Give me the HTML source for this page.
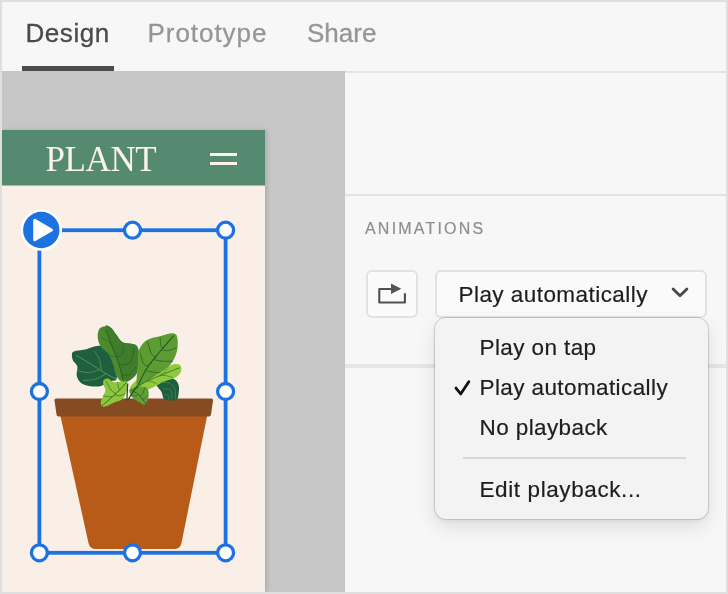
<!DOCTYPE html>
<html>
<head>
<meta charset="utf-8">
<style>
html,body{margin:0;padding:0;}
body{width:728px;height:594px;overflow:hidden;background:#dfdfdf;font-family:"Liberation Sans",sans-serif;position:relative;}
#app{position:absolute;left:2px;top:2px;width:724px;height:590px;background:#f7f7f7;overflow:hidden;will-change:transform;}
.abs{position:absolute;}
#topbar{left:0;top:0;width:724px;height:69px;background:#f7f7f7;}
.tab{position:absolute;top:15.5px;font-size:26px;line-height:30px;color:#969696;white-space:nowrap;-webkit-text-stroke:0.3px currentColor;}
#canvas{left:0;top:69px;width:343px;height:521px;background:#c6c6c6;}
#panel{left:343px;top:69px;width:381px;height:521px;background:#f7f7f7;}
.hr{position:absolute;background:#e3e3e3;height:2px;}
#art{left:0;top:128px;width:263px;height:462px;background:#f9efe7;box-shadow:2px 0 4px rgba(0,0,0,0.13);}
#arthead{left:0;top:0;width:263px;height:55px;background:#548a6f;border-bottom:1px solid #a6bcab;}
#plant{position:absolute;left:43.5px;top:9.5px;font-family:"Liberation Serif",serif;font-size:35px;line-height:40px;color:#fbf3ea;white-space:nowrap;letter-spacing:-0.4px;}
.btn{position:absolute;box-sizing:border-box;border:2px solid #e2e2e2;border-radius:6px;background:#fafafa;}
#menu{left:432.5px;top:315.5px;width:273.5px;height:201px;border-radius:11px;background:#f4f3f3;box-shadow:0 0 0 1px rgba(0,0,0,0.13),0 8px 20px rgba(0,0,0,0.1),0 2px 5px rgba(0,0,0,0.06);}
.mi{position:absolute;left:45px;font-size:22.5px;line-height:26px;letter-spacing:0.4px;color:#1e1e1e;white-space:nowrap;-webkit-text-stroke:0.2px #1e1e1e;}
</style>
</head>
<body>
<div id="app">
  <div id="topbar" class="abs">
    <div class="tab" style="left:23.5px;color:#4a4a4a;letter-spacing:0.55px;">Design</div>
    <div class="tab" style="left:145.5px;letter-spacing:0.95px;">Prototype</div>
    <div class="tab" style="left:305px;">Share</div>
    <div class="abs" style="left:20px;top:64px;width:92px;height:5px;background:#4b4b4b;"></div>
  </div>
  <div id="canvas" class="abs"></div>
  <div id="panel" class="abs">
    <div class="hr" style="left:0;top:0;width:381px;height:2px;"></div>
    <div class="hr" style="left:0;top:123px;width:381px;"></div>
    <div class="hr" style="left:0;top:293px;width:381px;height:3.5px;background:#e6e6e6;"></div>
    <div class="abs" style="left:20px;top:147.5px;font-size:16px;line-height:20px;letter-spacing:2.2px;color:#8e8e8e;-webkit-text-stroke:0.2px #8e8e8e;">ANIMATIONS</div>
  </div>
  <div id="art" class="abs">
    <div id="arthead" class="abs">
      <div id="plant">PLANT</div>
      <div class="abs" style="left:208px;top:23px;width:27px;height:3px;background:#fbf3ea;"></div>
      <div class="abs" style="left:208px;top:32px;width:27px;height:3px;background:#fbf3ea;"></div>
    </div>
    <svg class="abs" style="left:0;top:56px;" width="264" height="406" viewBox="2 186 264 406">
      <!-- pot -->
      <path d="M60 414 L207.5 414 L181.5 543 Q180.3 549 174 549 L96 549 Q89.7 549 88.5 543 Z" fill="#b85b18"/>
      <path d="M56 398.5 L211.5 398.5 Q213.2 398.5 213 400.5 L211 414.5 Q210.7 416.5 209 416.5 L58.5 416.5 Q56.8 416.5 56.5 414.5 L54.5 400.5 Q54.3 398.5 56 398.5 Z" fill="#854b21"/>
      <path d="M73.8 351.5C76 350.6 80.9 350.6 85 349.6C89.1 348.7 94.5 345.8 98.5 345.8C102.5 345.7 106.3 346.7 109 349.2C111.8 351.8 113.5 356.3 114.8 361.2C116.1 366 117.5 375.1 116.7 378.5C115.9 381.8 113 380 110 381.3C107 382.7 102.9 386.1 98.5 386.5C94 387 86.7 385.9 83.1 384.2C79.5 382.6 77.9 379.5 76.9 376.5C76 373.6 77.9 369.2 77.3 366.5C76.7 363.9 74 362.7 73.1 360.8C72.2 358.8 71.8 356.5 71.9 355C72.1 353.5 71.7 352.4 73.8 351.5Z" fill="#1f5f3f"/>
      <path d="M105.2 326.2C103.3 326.3 100.7 327 99.4 328.8C98.2 330.7 97.5 334.1 97.7 337.1C97.9 340.1 99 344 100.8 346.7C102.5 349.5 106.1 350.6 108.1 353.5C110.1 356.3 111.4 360.2 112.9 364C114.3 367.9 114.8 373.5 116.7 376.5C118.7 379.6 121.2 382.6 124.4 382.3C127.6 382 133.5 378.6 136 374.6C138.4 370.6 139 362.9 139.2 358.3C139.5 353.6 138.6 349.1 137.3 346.7C136 344.3 134 344.6 131.5 343.8C129.1 343.1 125.1 343.8 122.5 342.3C119.9 340.8 118.1 337.1 116.2 334.6C114.2 332.2 112.8 329.1 111 327.7C109.1 326.3 107.1 326 105.2 326.2Z" fill="#4b8b2e"/>
      <path d="M105.6 326.5C105.7 329.6 109.7 339.7 111.9 345.8C114.1 351.9 116.7 357.1 118.7 363.1C120.6 369.1 120.6 379.8 123.5 381.7C126.3 383.7 133.3 378.5 136 374.6C138.6 370.7 139 362.9 139.2 358.3C139.5 353.6 138.6 349.1 137.3 346.7C136 344.3 134 344.6 131.5 343.8C129.1 343.1 125.1 343.8 122.5 342.3C119.9 340.8 118.1 337.1 116.2 334.6C114.2 332.2 112.7 329 111 327.7C109.2 326.3 105.4 323.5 105.6 326.5Z" fill="#3f7c2b"/>
      <path d="M155.8 381.3C156.9 379.9 160.8 378.1 163.8 377.7C166.9 377.3 171.4 377.8 173.8 379C176.3 380.3 177.9 382.4 178.7 385.2C179.4 388 178.8 393.3 178.3 395.8C177.8 398.2 178 399.4 175.8 400C173.5 400.6 167.2 401 164.8 399.6C162.4 398.3 162.8 394.2 161.5 391.9C160.3 389.7 158.1 387.9 157.1 386.2C156.2 384.4 154.6 382.8 155.8 381.3Z" fill="#1f5f3f"/>
      <path d="M130.2 387.1C131.3 384.7 136.4 379.6 140.8 376.9C145.1 374.3 151 373.1 156.2 371.2C161.3 369.2 167.7 366.1 171.5 365C175.4 363.9 177.6 363.7 179.2 364.6C180.9 365.5 181.8 368.3 181.3 370.4C180.9 372.4 179.1 375.1 176.3 376.9C173.6 378.8 168.8 379.6 164.8 381.3C160.8 383.1 156 386.1 152.3 387.7C148.6 389.3 145.7 390.6 142.7 391.2C139.6 391.7 136.1 391.8 134 391.2C132 390.5 129.1 389.5 130.2 387.1Z" fill="#90c940"/>
      <path d="M136.9 386.5C135.8 383.4 137.6 370 137.9 364C138.2 358 137.5 354.5 138.8 350.6C140.2 346.6 142.6 342.8 146.2 340.4C149.7 338 155.5 337.3 160 336.2C164.5 335 170.2 333 173.1 333.3C176 333.5 176.6 335 177.3 337.7C178 340.4 177.9 346 177.3 349.6C176.7 353.2 175.4 356.3 173.8 359.2C172.3 362.1 171 364.3 168.1 366.9C165.1 369.6 160.1 372.4 156.2 375C152.2 377.6 147.8 380.8 144.6 382.7C141.4 384.6 138 389.6 136.9 386.5Z" fill="#5c9c33"/>
      <path d="M103.8 380C104.6 379 106.7 378.2 108.1 378.5C109.5 378.7 110.7 380.9 112.3 381.5C113.9 382.2 115.8 382.5 117.7 382.3C119.6 382.1 121.8 380.2 123.5 380.4C125.1 380.6 127.2 381.5 127.7 383.5C128.2 385.4 127.5 389.2 126.5 391.9C125.6 394.6 124 397.9 121.9 399.6C119.9 401.4 116.5 401.5 114.2 402.5C111.9 403.5 110 404.7 108.1 405.4C106.2 406.1 103.9 407.1 102.7 406.5C101.5 406 100.6 403.7 100.8 401.9C100.9 400.1 102.7 397.8 103.5 395.8C104.2 393.8 105.4 391.9 105.4 390C105.4 388.1 103.5 386.3 103.3 384.6C103 382.9 103 381 103.8 380Z" fill="#8dc63f"/>
      <path d="M129.6 389.2C130.7 388.2 134.3 388 136.9 387.7C139.6 387.3 143.6 386.4 145.6 387.1C147.5 387.8 148.3 389.8 148.7 391.9C149 394 148.4 397.5 147.7 399.6C147 401.7 146.1 404.2 144.6 404.6C143.1 405 140.8 403 138.8 401.9C136.9 400.8 134.5 399.4 133.1 398.1C131.6 396.7 130.8 395.3 130.2 393.8C129.6 392.4 128.5 390.3 129.6 389.2Z" fill="#5fa036"/>
      <path d="M76.3 355.4C78.8 356.8 86.1 361.2 90.8 364C95.4 366.9 100.1 370.2 104.2 372.7C108.4 375.2 113.8 377.8 115.8 378.8" fill="none" stroke="#4f9a52" stroke-width="1" stroke-linecap="round"/>
      <path d="M94.6 351.5C95.4 352.8 98.3 356.2 99.4 359.2C100.5 362.3 101 368 101.3 369.8" fill="none" stroke="#4f9a52" stroke-width="0.8" stroke-linecap="round"/>
      <path d="M78.3 370.8C80 371.1 85.3 372.9 88.8 372.7C92.4 372.5 97.7 370.3 99.4 369.8" fill="none" stroke="#4f9a52" stroke-width="0.8" stroke-linecap="round"/>
      <path d="M83.1 380.4C85 380.2 90.8 380.5 94.6 379.4C98.5 378.3 104.2 374.6 106.2 373.7" fill="none" stroke="#4f9a52" stroke-width="0.8" stroke-linecap="round"/>
      <path d="M105.2 329.4C106.3 332.1 109.7 340.2 111.9 345.8C114.2 351.4 116.7 357.1 118.7 363.1C120.6 369 122.7 378.3 123.5 381.3" fill="none" stroke="#2b5e22" stroke-width="1" stroke-linecap="round"/>
      <path d="M101.3 338.1C102.5 338.6 106.4 339.7 108.1 341C109.8 342.2 111 344.6 111.5 345.4" fill="none" stroke="#2b5e22" stroke-width="0.7" stroke-linecap="round"/>
      <path d="M123.5 345.8C123.1 347.4 122.8 353.6 121.5 355.4C120.3 357.1 117.1 356.2 116.2 356.3" fill="none" stroke="#2b5e22" stroke-width="0.7" stroke-linecap="round"/>
      <path d="M134 348.7C133.4 350.9 132.7 359.3 130.2 362.1C127.7 364.9 121.1 364.8 119.2 365.4" fill="none" stroke="#2b5e22" stroke-width="0.7" stroke-linecap="round"/>
      <path d="M136 366.9C135 368.2 132.5 373.3 130.2 374.6C127.9 376 123.3 374.9 121.9 375" fill="none" stroke="#2b5e22" stroke-width="0.7" stroke-linecap="round"/>
      <path d="M106.2 352.5C107.1 353.1 110.3 355.7 111.9 356.3C113.5 357 115.1 356.3 115.8 356.3" fill="none" stroke="#2b5e22" stroke-width="0.7" stroke-linecap="round"/>
      <path d="M173.5 335.8C171.2 338.4 164.5 346 160 351.5C155.5 357.1 150.4 362.8 146.5 368.8C142.7 374.9 138.5 384.9 136.9 388.1" fill="none" stroke="#24571f" stroke-width="1.1" stroke-linecap="round"/>
      <path d="M160 337.7C160.2 339 160.5 344 161 345.8C161.4 347.5 162.6 347.7 162.9 348.1" fill="none" stroke="#24571f" stroke-width="0.7" stroke-linecap="round"/>
      <path d="M147.5 341.9C148.1 343.8 150 350.9 151.3 353.5C152.7 356 155 356.7 155.8 357.3" fill="none" stroke="#24571f" stroke-width="0.7" stroke-linecap="round"/>
      <path d="M140.4 353.5C140.9 355.2 142.2 362 143.7 364C145.1 366.1 148 365.6 148.8 366" fill="none" stroke="#24571f" stroke-width="0.7" stroke-linecap="round"/>
      <path d="M176.3 347.7C175.1 348.2 171.1 350.3 168.7 350.6C166.2 350.9 162.7 349.8 161.5 349.6" fill="none" stroke="#24571f" stroke-width="0.7" stroke-linecap="round"/>
      <path d="M172.5 361.2C170.7 361.2 165 361.4 161.9 361.2C158.8 360.9 155.2 359.9 153.8 359.6" fill="none" stroke="#24571f" stroke-width="0.7" stroke-linecap="round"/>
      <path d="M160 372.7C158.4 372.5 152.8 372.1 150.4 371.7C148 371.3 146.4 370.6 145.6 370.4" fill="none" stroke="#24571f" stroke-width="0.7" stroke-linecap="round"/>
      <path d="M179.2 367.9C176 369.2 166.1 373 160 375.6C153.9 378.1 147.2 381 142.7 383.3C138.1 385.5 134.4 388.1 132.7 389" fill="none" stroke="#3d7d27" stroke-width="1" stroke-linecap="round"/>
      <path d="M167.7 368.8C167.1 369.5 165.1 371.6 163.8 372.7C162.6 373.8 160.6 375.1 160 375.6" fill="none" stroke="#3d7d27" stroke-width="0.7" stroke-linecap="round"/>
      <path d="M172.5 377.5C171.4 377.2 167.9 375.9 165.8 375.6C163.7 375.3 161 375.6 160 375.6" fill="none" stroke="#3d7d27" stroke-width="0.7" stroke-linecap="round"/>
      <path d="M154.2 374.6C153.6 375.3 151.7 377.3 150.4 378.5C149.1 379.6 147.2 380.9 146.5 381.3" fill="none" stroke="#3d7d27" stroke-width="0.7" stroke-linecap="round"/>
      <path d="M156.2 383.3C155.2 382.9 152 381.7 150.4 381.3C148.8 381 147.2 381.3 146.5 381.3" fill="none" stroke="#3d7d27" stroke-width="0.7" stroke-linecap="round"/>
      <path d="M161 382.3C162.4 382.5 167.3 382.1 169.6 383.3C172 384.4 174 386.5 175 389C176 391.6 175.3 397.1 175.4 398.7" fill="none" stroke="#3f8a55" stroke-width="0.8" stroke-linecap="round"/>
      <path d="M163.8 389C165 389.2 169.2 388.4 170.6 390C171.9 391.6 171.7 397.2 171.9 398.7" fill="none" stroke="#3f8a55" stroke-width="0.7" stroke-linecap="round"/>
      <path d="M164.8 394.8C165.4 394.9 167.4 394.6 168.1 395.4C168.7 396.1 168.6 398.6 168.7 399.2" fill="none" stroke="#3f8a55" stroke-width="0.7" stroke-linecap="round"/>
      <path d="M126.3 382.7C124.9 384.2 120.7 388.9 117.7 391.9C114.6 394.9 110.6 398.3 108.1 400.6C105.6 402.8 103.6 404.6 102.7 405.4" fill="none" stroke="#2f6b23" stroke-width="1" stroke-linecap="round"/>
      <path d="M106.2 381.3C107 382.8 109.4 388 111 390C112.6 392 115 392.9 115.8 393.5" fill="none" stroke="#2f6b23" stroke-width="0.7" stroke-linecap="round"/>
      <path d="M117.7 382.7C117.9 383.6 118.3 386.9 118.7 388.1C119 389.2 119.8 389.4 120 389.6" fill="none" stroke="#2f6b23" stroke-width="0.7" stroke-linecap="round"/>
      <path d="M103.3 395.8C104.1 395.9 106.6 396.6 108.1 396.7C109.5 396.9 111.3 396.7 111.9 396.7" fill="none" stroke="#2f6b23" stroke-width="0.7" stroke-linecap="round"/>
      <path d="M124.4 393.8C123.6 394.2 121.2 395.6 119.6 395.8C118 395.9 115.6 395 114.8 394.8" fill="none" stroke="#2f6b23" stroke-width="0.7" stroke-linecap="round"/>
      <path d="M131.2 390.4C132.4 391.1 136.4 392.6 138.8 394.8C141.2 397 144.5 402 145.6 403.5" fill="none" stroke="#2a6126" stroke-width="0.9" stroke-linecap="round"/>
      <path d="M144.6 388.1C144.3 389 143.5 392.6 142.7 393.8C141.9 395.1 140.3 395.4 139.8 395.8" fill="none" stroke="#2a6126" stroke-width="0.7" stroke-linecap="round"/>
      <path d="M147.5 395.8C147 396.2 145.5 398.1 144.6 398.7C143.8 399.2 142.7 398.8 142.3 398.8" fill="none" stroke="#2a6126" stroke-width="0.7" stroke-linecap="round"/>
      <path d="M132.1 395.8C132.8 395.8 135 396 136 395.8C136.9 395.5 137.6 394.5 137.9 394.2" fill="none" stroke="#2a6126" stroke-width="0.7" stroke-linecap="round"/>
      <path d="M127.7 384.2C127.6 385.5 127.4 389.4 127.3 391.9C127.2 394.5 127 398.3 126.9 399.6" fill="none" stroke="#1e4d24" stroke-width="1.2" stroke-linecap="round"/>
      <path d="M136.9 386.5C136.3 387.4 134.5 389.7 133.1 391.9C131.6 394.1 129.1 398.3 128.3 399.6" fill="none" stroke="#1e4d24" stroke-width="1.2" stroke-linecap="round"/>
      <!-- selection -->
      <rect x="39.4" y="230.2" width="186.2" height="322.6" fill="none" stroke="#1b72e0" stroke-width="3.8"/>
      <g fill="#ffffff" stroke="#1b72e0" stroke-width="3.3">
        <circle cx="132.5" cy="230.2" r="8"/>
        <circle cx="225.6" cy="230.2" r="8"/>
        <circle cx="39.4" cy="391.5" r="8"/>
        <circle cx="225.6" cy="391.5" r="8"/>
        <circle cx="39.4" cy="552.8" r="8"/>
        <circle cx="132.5" cy="552.8" r="8"/>
        <circle cx="225.6" cy="552.8" r="8"/>
      </g>
      <circle cx="41.3" cy="230" r="20.8" fill="#ffffff"/>
      <circle cx="41.3" cy="230" r="18.2" fill="#1b72e0"/>
      <path d="M34.7 220.3 L51.5 230 L34.7 239.7 Z" fill="#ffffff" stroke="#ffffff" stroke-width="3" stroke-linejoin="round"/>
    </svg>
  </div>
  <!-- controls -->
  <div class="btn" style="left:364px;top:268px;width:51.5px;height:47.5px;"></div>
  <svg class="abs" style="left:364px;top:268px;" width="52" height="48" viewBox="366 270 52 48">
    <path d="M391 289 H379.3 V302.5 H404.9 V293.2" fill="none" stroke="#505050" stroke-width="2.1" stroke-linejoin="round" stroke-linecap="butt"/>
    <path d="M391 283.4 L401.3 288.7 L391 294.1 Z" fill="#555555"/>
  </svg>
  <div class="btn" style="left:432.5px;top:268px;width:272.5px;height:47.5px;">
    <div class="abs" style="left:22px;top:9.5px;font-size:22.5px;line-height:26px;letter-spacing:0.45px;color:#1e1e1e;white-space:nowrap;-webkit-text-stroke:0.2px #1e1e1e;">Play automatically</div>
  </div>
  <svg class="abs" style="left:664px;top:280px;" width="30" height="24" viewBox="666 282 30 24">
    <path d="M673.1 289.1 L680 295.8 L686.9 289.1" fill="none" stroke="#484848" stroke-width="2.8" stroke-linecap="round" stroke-linejoin="round"/>
  </svg>
  <div id="menu" class="abs">
    <div class="mi" style="top:17px;">Play on tap</div>
    <div class="mi" style="top:57.3px;">Play automatically</div>
    <div class="mi" style="top:97px;">No playback</div>
    <div class="abs" style="left:28.5px;top:139.5px;width:222.5px;height:1.5px;background:#d8d8d8;"></div>
    <div class="mi" style="top:159.3px;letter-spacing:0.6px;">Edit playback...</div>
    <svg class="abs" style="left:15px;top:58px;" width="24" height="24" viewBox="449.5 375.5 24 24">
      <path d="M455.5 387.6 L460.2 393.5 L468.3 381.2" fill="none" stroke="#111" stroke-width="2.8" stroke-linecap="round" stroke-linejoin="round"/>
    </svg>
  </div>
</div>
</body>
</html>
